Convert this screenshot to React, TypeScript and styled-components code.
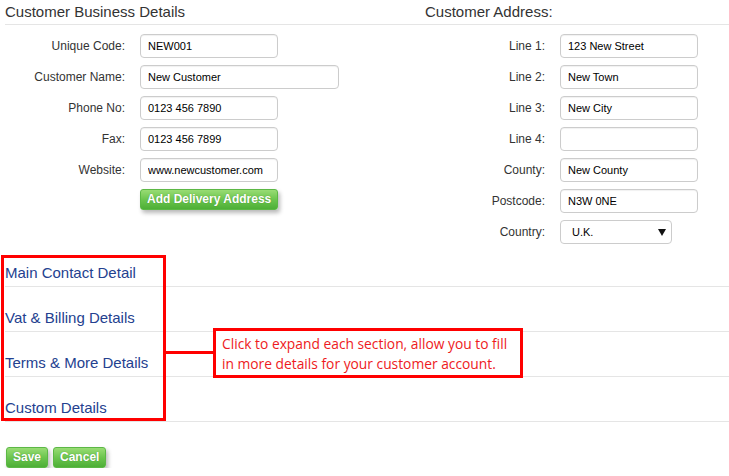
import styled, { createGlobalStyle } from 'styled-components';

const GlobalStyle = createGlobalStyle`
  body {
    margin: 0;
    background: #fff;
    font-family: "Liberation Sans", Arial, sans-serif;
    color: #333;
  }
`;

const Page = styled.div`
  padding: 0 0 0 5px;
  width: 724px;
`;

const Columns = styled.div`
  display: grid;
  grid-template-columns: 415px 1fr;
`;

const Column = styled.div<{ $indent?: number }>`
  display: flex;
  flex-direction: column;
  gap: 7px;
  h2 {
    padding-left: ${(p) => p.$indent || 0}px;
  }
`;

const Heading = styled.h2`
  margin: 0 0 2px;
  padding-top: 2px;
  padding-bottom: 2px;
  font-size: 15px;
  line-height: 20px;
  font-weight: normal;
  color: #333;
  border-bottom: 1px solid #e5e5e5;
`;

const Field = styled.div<{ $label: number }>`
  display: grid;
  grid-template-columns: ${(p) => p.$label}px 1fr;
  column-gap: 15px;
  align-items: center;
`;

const Label = styled.label`
  text-align: right;
  font-size: 12px;
  color: #333;
`;

const Input = styled.input<{ $width?: number }>`
  box-sizing: border-box;
  width: ${(p) => p.$width || 138}px;
  height: 24px;
  padding: 0 7px;
  border: 1px solid #ccc;
  border-radius: 4px;
  box-shadow: inset 0 1px 1px rgba(0, 0, 0, 0.06);
  font-family: "Liberation Sans", Arial, sans-serif;
  font-size: 11px;
  color: #000;
  outline: none;
`;

const SelectWrap = styled.div`
  position: relative;
  width: 112px;
  &::after {
    content: '';
    position: absolute;
    right: 6px;
    top: 9px;
    border-left: 4px solid transparent;
    border-right: 4px solid transparent;
    border-top: 7px solid #111;
    pointer-events: none;
  }
`;

const Select = styled.select`
  appearance: none;
  box-sizing: border-box;
  width: 112px;
  height: 24px;
  padding: 0 0 0 11px;
  border: 1px solid #ccc;
  border-radius: 4px;
  background: #fff;
  font-family: "Liberation Sans", Arial, sans-serif;
  font-size: 11px;
  color: #000;
`;

const GreenButton = styled.button`
  height: 21px;
  padding: 0 6px;
  border: 1px solid #5cb845;
  border-radius: 3px;
  background: linear-gradient(to bottom, #98dc74 0%, #6cc54e 50%, #4daf36 100%);
  box-shadow: 2px 3px 4px rgba(0, 0, 0, 0.28);
  color: #fff;
  font-family: "Liberation Sans", Arial, sans-serif;
  font-size: 12px;
  font-weight: bold;
  line-height: 19px;
  text-shadow: 0 0 1px rgba(40, 90, 20, 0.5);
  cursor: pointer;
`;

const ButtonRow = styled.div`
  padding-left: 135px;
`;

const Sections = styled.div`
  position: relative;
  margin-top: -2px;
`;

const Section = styled.div`
  padding: 21px 0 3px;
  border-bottom: 1px solid #e5e5e5;
  font-size: 15px;
  line-height: 20px;
  color: #24418f;
`;

const Highlight = styled.div`
  position: absolute;
  left: -4px;
  top: 13px;
  width: 159px;
  height: 160px;
  border: 3px solid #f00;
  pointer-events: none;
`;

const Callout = styled.div`
  position: absolute;
  left: 208px;
  top: 86px;
  box-sizing: border-box;
  width: 310px;
  height: 50px;
  padding: 3px 6px;
  border: 3px solid #f00;
  background: #fff;
  color: #ee1a22;
  font-family: "Open Sans", "Noto Sans", sans-serif;
  font-size: 13.8px;
  line-height: 20px;
  &::before {
    content: '';
    position: absolute;
    left: -50px;
    top: 20px;
    width: 47px;
    height: 3px;
    background: #f00;
  }
`;

const Footer = styled.div`
  display: flex;
  gap: 5px;
  padding: 25px 0 0 1px;
`;

const business = [
  { label: 'Unique Code:', value: 'NEW001' },
  { label: 'Customer Name:', value: 'New Customer', width: 199 },
  { label: 'Phone No:', value: '0123 456 7890' },
  { label: 'Fax:', value: '0123 456 7899' },
  { label: 'Website:', value: 'www.newcustomer.com' },
];

const address = [
  { label: 'Line 1:', value: '123 New Street' },
  { label: 'Line 2:', value: 'New Town' },
  { label: 'Line 3:', value: 'New City' },
  { label: 'Line 4:', value: '' },
  { label: 'County:', value: 'New County' },
  { label: 'Postcode:', value: 'N3W 0NE' },
];

const sections = ['Main Contact Detail', 'Vat & Billing Details', 'Terms & More Details', 'Custom Details'];

export default function App() {
  return (
    <Page>
      <GlobalStyle />
      <Columns>
        <Column>
          <Heading>Customer Business Details</Heading>
          {business.map((f) => (
            <Field key={f.label} $label={120}>
              <Label>{f.label}</Label>
              <Input defaultValue={f.value} $width={f.width} />
            </Field>
          ))}
          <ButtonRow>
            <GreenButton>Add Delivery Address</GreenButton>
          </ButtonRow>
        </Column>
        <Column $indent={5}>
          <Heading>Customer Address:</Heading>
          {address.map((f) => (
            <Field key={f.label} $label={125}>
              <Label>{f.label}</Label>
              <Input defaultValue={f.value} />
            </Field>
          ))}
          <Field $label={125}>
            <Label>Country:</Label>
            <SelectWrap>
              <Select defaultValue="U.K.">
                <option>U.K.</option>
              </Select>
            </SelectWrap>
          </Field>
        </Column>
      </Columns>
      <Sections>
        {sections.map((s) => (
          <Section key={s}>{s}</Section>
        ))}
        <Highlight />
        <Callout>
          Click to expand each section, allow you to fill
          <br />
          in more details for your customer account.
        </Callout>
      </Sections>
      <Footer>
        <GreenButton>Save</GreenButton>
        <GreenButton>Cancel</GreenButton>
      </Footer>
    </Page>
  );
}
